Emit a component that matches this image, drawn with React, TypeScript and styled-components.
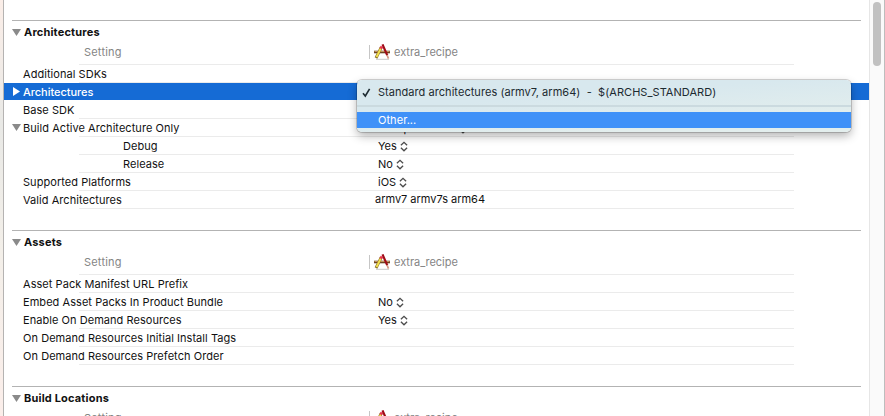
import React from 'react';
import styled, { createGlobalStyle, css } from 'styled-components';

const GlobalStyle = createGlobalStyle`
  * { box-sizing: border-box; }
  body { margin: 0; overflow: hidden; background: #fff; }
`;

const Window = styled.div`
  position: relative;
  display: flex;
  width: 885px;
  height: 416px;
  overflow: hidden;
  background: #fff;
  color: #111;
  font: 11px/19px Inter, 'Liberation Sans', sans-serif;
  letter-spacing: 0.05px;
  white-space: pre;
`;

const Sidebar = styled.div`
  flex: none;
  width: 4px;
  border-right: 1px solid #b5b3b2;
  background: linear-gradient(#fbeee8, #e9e9e6 30%, #f3efe9 60%, #fbeeea);
`;

const Content = styled.main`
  flex: none;
  width: 865px;
  padding-top: 20px;
`;

const SectionBox = styled.section`
  padding-bottom: 21px;
`;

const SectionTitle = styled.h2`
  display: flex;
  align-items: center;
  gap: 3px;
  height: 23px;
  margin: 0 8px;
  border-top: 1px solid #b3b3b3;
  font-size: 11px;
  font-weight: 700;
  letter-spacing: 0.18px;
`;

const ruled = css`
  background: linear-gradient(#ebebeb, #ebebeb) 75px 100% / 715px 1px no-repeat;
`;

const HeaderRow = styled.div`
  ${ruled}
  display: flex;
  align-items: center;
  height: 22px;
  padding: 0 0 4px 80px;
  color: #858585;
`;

const SettingHeading = styled.span`
  width: 285px;
  letter-spacing: 0.2px;
`;

const TargetHeading = styled.span`
  display: flex;
  align-items: center;
  gap: 4px;
  height: 14px;
  padding-left: 4px;
  border-left: 1px solid #c6c6c6;
  letter-spacing: -0.03px;
`;

const Row = styled.div<{ $selected?: boolean }>`
  ${ruled}
  display: flex;
  height: 18px;
  padding-left: 8px;
  ${p => p.$selected && css`
    height: 17px;
    margin-bottom: 1px;
    background: #156bd5;
    color: #fff;
    font-weight: 500;
    letter-spacing: -0.04px;
  `}
`;

const Disclosure = styled.span`
  display: flex;
  align-items: center;
  width: 11px;
  height: 17px;
`;

const Label = styled.span<{ $nested?: boolean }>`
  width: 355px;
  padding-left: ${p => (p.$nested ? 100 : 0)}px;
`;

const Value = styled.span<{ $plain?: boolean }>`
  display: flex;
  gap: 3px;
  height: 19px;
  margin-left: ${p => (p.$plain ? -3 : 0)}px;
  margin-top: ${p => (p.$plain ? -1 : 0)}px;
  letter-spacing: ${p => (p.$plain ? -0.02 : 0)}px;
`;

const ScrollTrack = styled.div`
  flex: none;
  width: 16px;
  padding: 2px 0 0 3px;
  border-left: 1px solid #e6e6e6;
  border-right: 1px solid #bdbdbd;
  background: #fafafa;
`;

const ScrollThumb = styled.div`
  width: 8px;
  height: 64px;
  border-radius: 4px;
  background: #c1c1c1;
`;

const Menu = styled.div`
  position: absolute;
  left: 357px;
  top: 80px;
  width: 494px;
  height: 52px;
  border-radius: 5px;
  background: linear-gradient(176deg, #d8e8ee 35%, #e3eeed 80%);
  box-shadow: 0 0 0 1px rgba(0, 0, 0, 0.17), 0 4px 10px rgba(0, 0, 0, 0.3);
`;

const MenuItem = styled.div<{ $active?: boolean }>`
  display: flex;
  align-items: center;
  height: ${p => (p.$active ? 16 : 25)}px;
  padding-left: 5px;
  background: ${p => (p.$active ? '#3f91f8' : 'transparent')};
  color: ${p => (p.$active ? '#fff' : '#1c2a30')};
`;

const CheckSlot = styled.span`
  display: flex;
  width: 16px;
`;

const Separator = styled.div`
  height: 2px;
  margin-bottom: 5px;
  background: #cbdadf;
`;

const StepperIcon = styled.svg`
  margin-top: 4px;
`;

const Triangle = ({ open, color = '#8a8a8a' }: { open: boolean; color?: string }) => (
  <svg width="9" height="9" viewBox="0 0 9 9">
    <path d={open ? 'M0 1h9L4.5 8z' : 'M1 0l7 4.5L1 9z'} fill={color} />
  </svg>
);

const Stepper = () => (
  <StepperIcon width="8" height="11" viewBox="0 0 8 11" fill="none" stroke="#4c4c4c" strokeWidth="1.3">
    <path d="M.9 4.3L4 1.3l3.1 3M.9 6.8L4 9.8l3.1-3" />
  </StepperIcon>
);

const Check = () => (
  <svg width="9" height="10" viewBox="0 0 9 10" fill="none" stroke="#1f2d33" strokeWidth="1.6">
    <path d="M1 5.2l2.3 2.8L7.6 .8" />
  </svg>
);

const ProjectIcon = () => (
  <svg width="16" height="16" viewBox="0 0 16 16" fill="none">
    <path d="M2 15.3h13" stroke="#c9c9c9" />
    <path d="M0 8h16" stroke="#6d4423" strokeWidth="2.6" />
    <path d="M.5 7.5h15" stroke="#c29461" />
    <path d="M7.2 3.5L2 14" stroke="#8a7028" strokeWidth="2.9" />
    <path d="M7 4L2.5 13" stroke="#f4e14c" strokeWidth="1.8" />
    <path d="M7.9 2.3L6.7 4.6" stroke="#e73550" strokeWidth="2.8" />
    <path d="M8.5 .4l4.8 11" stroke="#a00c17" strokeWidth="2.2" />
    <path d="M13 11l1.5 3.6" stroke="#d49b88" strokeWidth="1.7" />
  </svg>
);

type Setting = {
  label: string;
  value?: string;
  plain?: boolean;
  menu?: boolean;
  nested?: boolean;
  open?: boolean;
  selected?: boolean;
};

const sections: { title: string; settings: Setting[] }[] = [
  {
    title: 'Architectures',
    settings: [
      { label: 'Additional SDKs' },
      { label: 'Architectures', open: false, selected: true },
      { label: 'Base SDK' },
      { label: 'Build Active Architecture Only', open: true, value: 'Multiple values', menu: true },
      { label: 'Debug', value: 'Yes', menu: true, nested: true },
      { label: 'Release', value: 'No', menu: true, nested: true },
      { label: 'Supported Platforms', value: 'iOS', menu: true },
      { label: 'Valid Architectures', value: 'armv7 armv7s arm64', plain: true },
    ],
  },
  {
    title: 'Assets',
    settings: [
      { label: 'Asset Pack Manifest URL Prefix' },
      { label: 'Embed Asset Packs In Product Bundle', value: 'No', menu: true },
      { label: 'Enable On Demand Resources', value: 'Yes', menu: true },
      { label: 'On Demand Resources Initial Install Tags' },
      { label: 'On Demand Resources Prefetch Order' },
    ],
  },
  { title: 'Build Locations', settings: [] },
];

const SettingRow = ({ s }: { s: Setting }) => (
  <Row $selected={s.selected}>
    <Disclosure>
      {s.open !== undefined && <Triangle open={s.open} color={s.selected ? '#fff' : undefined} />}
    </Disclosure>
    <Label $nested={s.nested}>{s.label}</Label>
    {s.value && (
      <Value $plain={s.plain}>
        {s.value}
        {s.menu && <Stepper />}
      </Value>
    )}
  </Row>
);

export default function App() {
  return (
    <>
      <GlobalStyle />
      <Window>
        <Sidebar />
        <Content>
          {sections.map(section => (
            <SectionBox key={section.title}>
              <SectionTitle>
                <Triangle open />
                {section.title}
              </SectionTitle>
              <HeaderRow>
                <SettingHeading>Setting</SettingHeading>
                <TargetHeading>
                  <ProjectIcon />
                  extra_recipe
                </TargetHeading>
              </HeaderRow>
              {section.settings.map(s => <SettingRow key={s.label} s={s} />)}
            </SectionBox>
          ))}
        </Content>
        <ScrollTrack>
          <ScrollThumb />
        </ScrollTrack>
        <Menu>
          <MenuItem>
            <CheckSlot><Check /></CheckSlot>
            Standard architectures (armv7, arm64)  -  $(ARCHS_STANDARD)
          </MenuItem>
          <Separator />
          <MenuItem $active>
            <CheckSlot />
            Other...
          </MenuItem>
        </Menu>
      </Window>
    </>
  );
}
